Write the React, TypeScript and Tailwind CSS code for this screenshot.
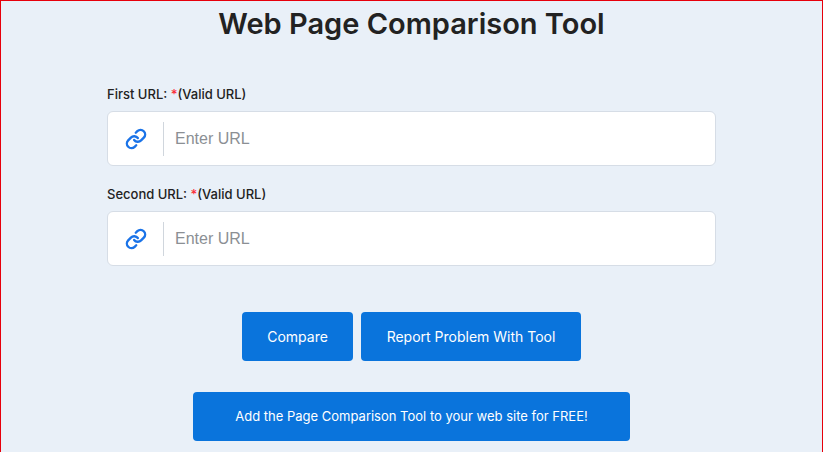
import { Link } from "lucide-react";

function Field({ label }: { label: string }) {
  return (
    <div className="w-[609px]">
      <div className="text-[13px] font-medium text-[#222] h-[17px] leading-[17px] mb-[8px]">
        {label} <span className="text-red-500">*</span>(Valid URL)
      </div>
      <div className="h-[55px] bg-white border border-[#d6dde6] rounded-[6px] flex items-center">
        <div className="w-[56px] h-[34px] flex items-center justify-center border-r border-[#d0d6dd]">
          <Link size={22} strokeWidth={2.6} className="text-[#1a73e8]" />
        </div>
        <span className="pl-[11px] text-[16px] text-[#8b8f94]" style={{ fontFamily: "'Liberation Sans', Arial, sans-serif" }}>Enter URL</span>
      </div>
    </div>
  );
}

export default function App() {
  return (
    <div className="w-[823px] h-[452px] bg-[#e9f0f8] border-l border-t border-r border-red-600 flex flex-col items-center overflow-hidden" style={{ fontFamily: "Inter, 'Noto Sans', sans-serif" }}>
      <h1 className="text-[29px] font-semibold text-[#222] mt-[4px] h-[38px] leading-[38px]">Web Page Comparison Tool</h1>
      <div className="mt-[43px] flex flex-col gap-[20px]">
        <Field label="First URL:" />
        <Field label="Second URL:" />
      </div>
      <div className="mt-[46px] flex gap-[8px]">
        <button className="h-[49px] w-[111px] bg-[#0a74dc] text-white text-[14px] rounded-[4px]">Compare</button>
        <button className="h-[49px] w-[220px] bg-[#0a74dc] text-white text-[14px] rounded-[4px]">Report Problem With Tool</button>
      </div>
      <button className="mt-[31px] h-[49px] w-[437px] bg-[#0a74dc] text-white text-[13px] rounded-[4px]">Add the Page Comparison Tool to your web site for FREE!</button>
    </div>
  );
}
